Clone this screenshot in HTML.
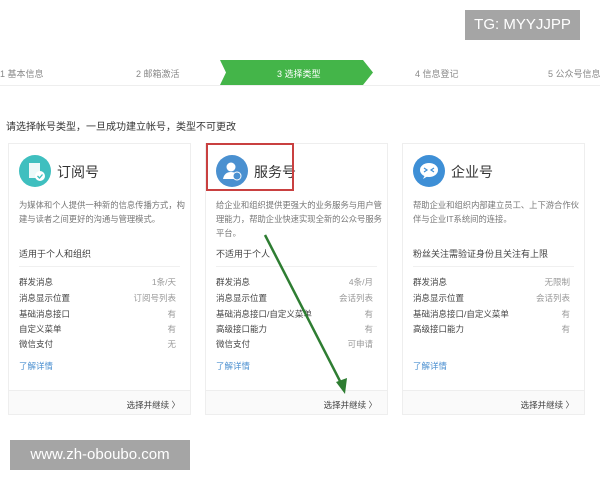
<!DOCTYPE html>
<html><head><meta charset="utf-8"><style>
*{margin:0;padding:0;box-sizing:border-box}
body{width:600px;height:480px;background:#fff;position:relative;overflow:hidden;font-family:"Liberation Sans","Noto Sans CJK SC",sans-serif;color:#333}
.a{position:absolute;white-space:nowrap}
.step{font-size:9px;color:#888;top:67px}
.card{position:absolute;top:143px;width:183px;height:272px;border:1px solid #eee;background:#fff}
.card .ic{position:absolute;left:10px;top:11px;width:32px;height:32px;border-radius:50%}
.card .t{position:absolute;left:48px;top:18px;font-size:14px;color:#333}
.card .d{position:absolute;left:10px;top:54px;width:172px;font-size:8.3px;line-height:14px;color:#777;white-space:normal}
.card .s{position:absolute;left:10px;top:103px;font-size:9px;color:#444}
.card .hr{position:absolute;left:10px;right:10px;top:122px;border-top:1px solid #f0f0f0}
.card .r{position:absolute;left:10px;right:14px;font-size:8.5px;color:#444}
.card .r span{float:right;color:#999}
.card .l{position:absolute;left:10px;top:216px;font-size:8.5px;color:#4a8fd0}
.card .f{position:absolute;left:0;right:0;bottom:0;height:24px;background:#fafafa;border-top:1px solid #eee;font-size:8.5px;text-align:right;padding:8px 10px 0 0;color:#444}
</style></head><body>
<div class="a" style="left:465px;top:10px;width:115px;height:30px;background:#a5a5a5;color:#fff;font-size:15px;line-height:30px;text-align:center">TG: MYYJJPP</div>
<div class="a" style="left:0;top:85px;width:600px;border-top:1px solid #eee"></div>
<svg class="a" style="left:220px;top:60px" width="155" height="25"><polygon points="0,0 143,0 153,12.5 143,25 0,25 6,12.5" fill="#44b549"/></svg>
<div class="a step" style="left:0">1 基本信息</div>
<div class="a step" style="left:136px">2 邮箱激活</div>
<div class="a step" style="left:277px;color:#fff">3 选择类型</div>
<div class="a step" style="left:415px">4 信息登记</div>
<div class="a step" style="left:548px">5 公众号信息</div>
<div class="a" style="left:6px;top:118px;font-size:10px;color:#333">请选择帐号类型，一旦成功建立帐号，类型不可更改</div>

<div class="card" style="left:8px">
<div class="ic" style="background:#3fbfbf"><svg width="32" height="32"><rect x="10" y="8" width="11" height="15" fill="#fff" opacity=".9"/><circle cx="21" cy="21" r="5" fill="#fff"/><path d="M18.5 21l2 2 3-3.5" stroke="#3fbfbf" stroke-width="1.3" fill="none"/></svg></div><div class="t">订阅号</div>
<div class="d">为媒体和个人提供一种新的信息传播方式，构建与读者之间更好的沟通与管理模式。</div>
<div class="s">适用于个人和组织</div><div class="hr"></div>
<div class="r" style="top:132px">群发消息<span>1条/天</span></div>
<div class="r" style="top:148px">消息显示位置<span>订阅号列表</span></div>
<div class="r" style="top:164px">基础消息接口<span>有</span></div>
<div class="r" style="top:179px">自定义菜单<span>有</span></div>
<div class="r" style="top:194px">微信支付<span>无</span></div>
<div class="l">了解详情</div><div class="f">选择并继续 〉</div></div>

<div class="card" style="left:205px">
<div class="ic" style="background:#4a90d0"><svg width="32" height="32"><circle cx="15" cy="12" r="4.5" fill="#fff"/><path d="M7 24c1-5 4-7 8-7s7 2 8 7z" fill="#fff"/><circle cx="21" cy="21" r="4" fill="#4a90d0" stroke="#fff"/></svg></div><div class="t">服务号</div>
<div class="d">给企业和组织提供更强大的业务服务与用户管理能力，帮助企业快速实现全新的公众号服务平台。</div>
<div class="s">不适用于个人</div><div class="hr"></div>
<div class="r" style="top:132px">群发消息<span>4条/月</span></div>
<div class="r" style="top:148px">消息显示位置<span>会话列表</span></div>
<div class="r" style="top:164px">基础消息接口/自定义菜单<span>有</span></div>
<div class="r" style="top:179px">高级接口能力<span>有</span></div>
<div class="r" style="top:194px">微信支付<span>可申请</span></div>
<div class="l">了解详情</div><div class="f">选择并继续 〉</div></div>

<div class="card" style="left:402px">
<div class="ic" style="background:#3e8fd6"><svg width="32" height="32"><ellipse cx="16" cy="15" rx="9" ry="7" fill="#fff"/><path d="M12 20l-2 4 5-3z" fill="#fff"/><path d="M11 13l3 2-3 2M21 13l-3 2 3 2" stroke="#3e8fd6" stroke-width="1.2" fill="none"/></svg></div><div class="t">企业号</div>
<div class="d">帮助企业和组织内部建立员工、上下游合作伙伴与企业IT系统间的连接。</div>
<div class="s">粉丝关注需验证身份且关注有上限</div><div class="hr"></div>
<div class="r" style="top:132px">群发消息<span>无限制</span></div>
<div class="r" style="top:148px">消息显示位置<span>会话列表</span></div>
<div class="r" style="top:164px">基础消息接口/自定义菜单<span>有</span></div>
<div class="r" style="top:179px">高级接口能力<span>有</span></div>
<div class="l">了解详情</div><div class="f">选择并继续 〉</div></div>

<div class="a" style="left:206px;top:143px;width:88px;height:48px;border:2px solid #c94040"></div>
<svg class="a" style="left:0;top:0" width="600" height="480"><line x1="265" y1="235" x2="342" y2="385" stroke="#2e7d32" stroke-width="2.5"/><polygon points="345,394 336,382 347,378" fill="#2e7d32"/></svg>
<div class="a" style="left:10px;top:440px;width:180px;height:30px;background:#a5a5a5;color:#fff;font-size:15px;line-height:30px;text-align:center">www.zh-oboubo.com</div>
</body></html>
